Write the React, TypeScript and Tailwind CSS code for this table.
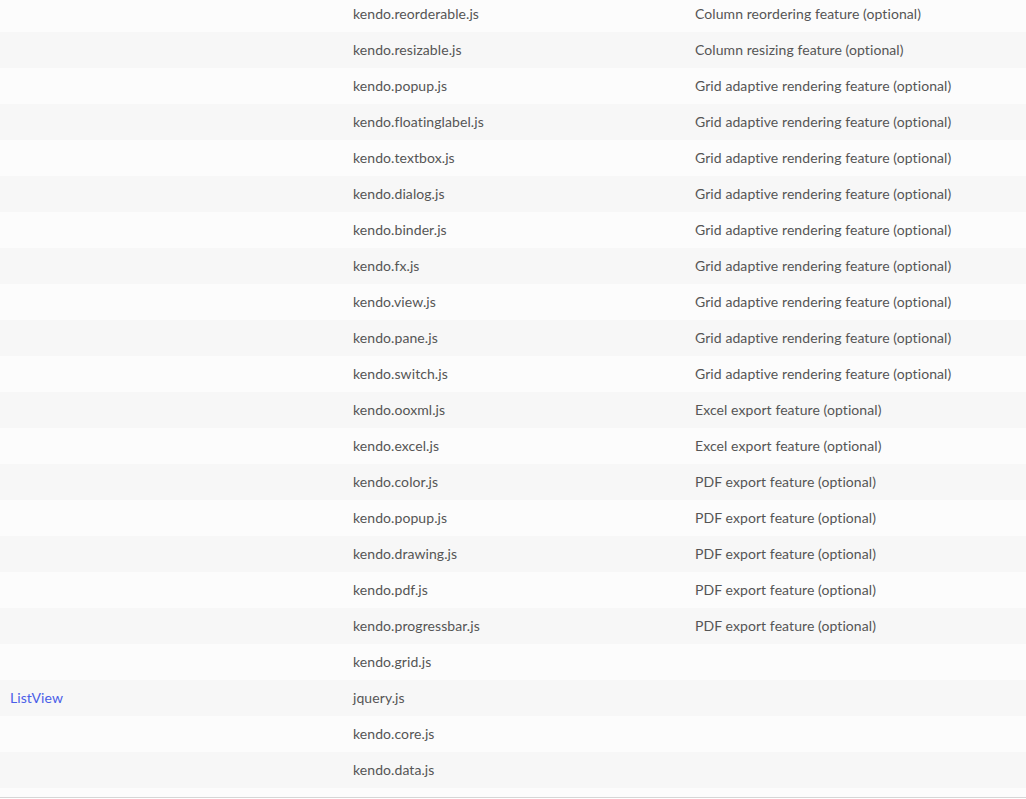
import React from "react";

type Row = { name?: string; file: string; desc?: string };

const rows: Row[] = [
  { file: "kendo.reorderable.js", desc: "Column reordering feature (optional)" },
  { file: "kendo.resizable.js", desc: "Column resizing feature (optional)" },
  { file: "kendo.popup.js", desc: "Grid adaptive rendering feature (optional)" },
  { file: "kendo.floatinglabel.js", desc: "Grid adaptive rendering feature (optional)" },
  { file: "kendo.textbox.js", desc: "Grid adaptive rendering feature (optional)" },
  { file: "kendo.dialog.js", desc: "Grid adaptive rendering feature (optional)" },
  { file: "kendo.binder.js", desc: "Grid adaptive rendering feature (optional)" },
  { file: "kendo.fx.js", desc: "Grid adaptive rendering feature (optional)" },
  { file: "kendo.view.js", desc: "Grid adaptive rendering feature (optional)" },
  { file: "kendo.pane.js", desc: "Grid adaptive rendering feature (optional)" },
  { file: "kendo.switch.js", desc: "Grid adaptive rendering feature (optional)" },
  { file: "kendo.ooxml.js", desc: "Excel export feature (optional)" },
  { file: "kendo.excel.js", desc: "Excel export feature (optional)" },
  { file: "kendo.color.js", desc: "PDF export feature (optional)" },
  { file: "kendo.popup.js", desc: "PDF export feature (optional)" },
  { file: "kendo.drawing.js", desc: "PDF export feature (optional)" },
  { file: "kendo.pdf.js", desc: "PDF export feature (optional)" },
  { file: "kendo.progressbar.js", desc: "PDF export feature (optional)" },
  { file: "kendo.grid.js" },
  { name: "ListView", file: "jquery.js" },
  { file: "kendo.core.js" },
  { file: "kendo.data.js" },
];

export default function App() {
  return (
    <div
      className="w-[1026px] h-[799px] overflow-hidden bg-white"
      style={{ fontFamily: "Lato, 'Noto Sans', sans-serif" }}
    >
      <div className="-mt-[4px] border-b border-[#d6d6d6]">
        {rows.map((r, i) => (
          <div
            key={i}
            className={`grid grid-cols-[343px_342px_1fr] h-[36px] pb-[2px] items-center text-[14px] tracking-[0.08px] text-[#555555] ${
              i % 2 === 1 ? "bg-[#f7f7f7]" : "bg-[#fcfcfc]"
            }`}
          >
            <div className="pl-[10px]">
              {r.name && <span className="text-[#4a5ee8]">{r.name}</span>}
            </div>
            <div className="pl-[10px]">{r.file}</div>
            <div className="pl-[10px]">{r.desc}</div>
          </div>
        ))}
        <div className="h-[9px] bg-[#fcfcfc]" />
      </div>
    </div>
  );
}
